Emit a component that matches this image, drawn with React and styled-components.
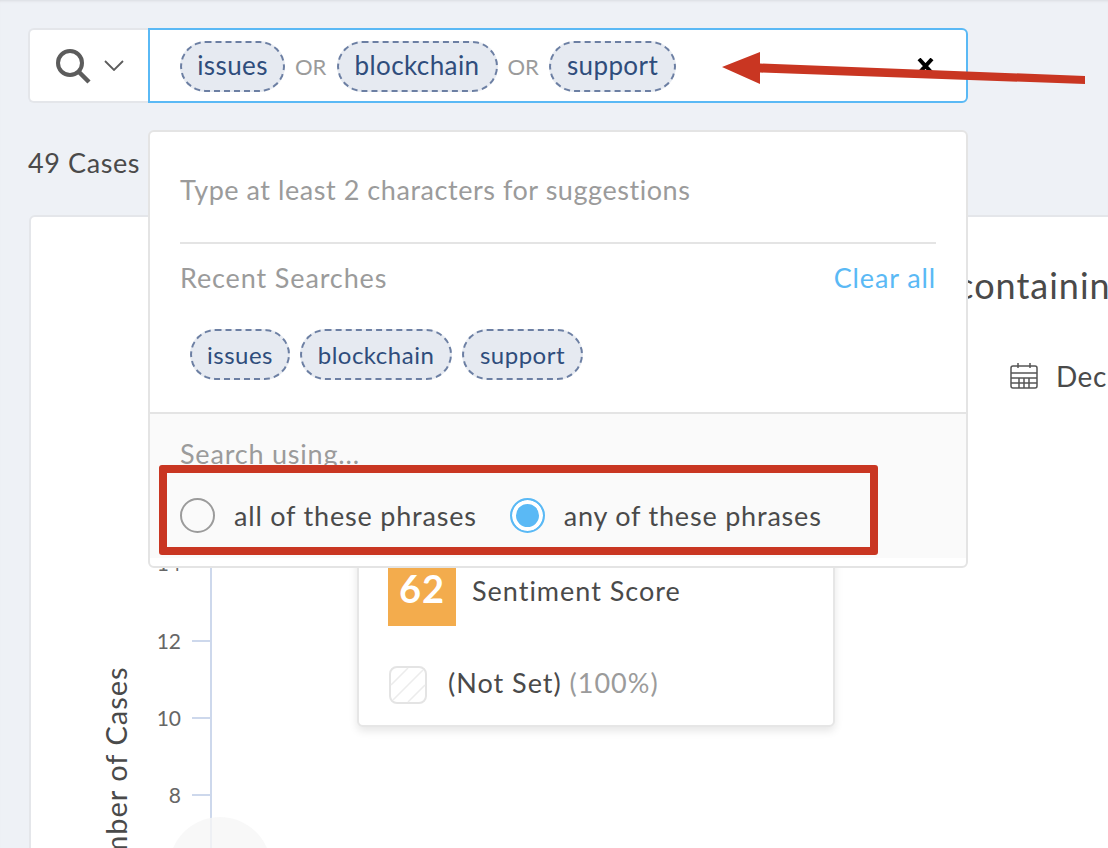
import styled, { createGlobalStyle } from 'styled-components';

const GlobalStyle = createGlobalStyle`
  html, body {
    margin: 0;
    padding: 0;
    background: #eef1f6;
  }
  * {
    box-sizing: border-box;
  }
`;

const Page = styled.div`
  position: relative;
  width: 1108px;
  height: 848px;
  overflow: hidden;
  padding: 28px 0 0 28px;
  background: #eef1f6;
  box-shadow: inset 0 3px 3px -2px #d9dbe0;
  font-family: Lato, "Noto Sans", sans-serif;
  color: #4a4a4a;
`;

const SearchRow = styled.div`
  display: flex;
  width: 940px;
  height: 75px;
`;

const Selector = styled.div`
  display: flex;
  align-items: center;
  gap: 12px;
  width: 120px;
  padding-left: 26px;
  background: #fff;
  border: 2px solid #e4e6ea;
  border-right: 0;
  border-radius: 6px 0 0 6px;
`;

const SearchField = styled.div`
  flex: 1;
  display: flex;
  align-items: center;
  gap: 10px;
  padding: 1px 32px 0 30px;
  background: #fff;
  border: 2px solid #5ab9f5;
  border-radius: 0 6px 6px 0;
`;

const Chip = styled.span`
  display: inline-flex;
  align-items: center;
  justify-content: center;
  flex: none;
  height: 51px;
  width: ${(p) => p.$w}px;
  padding-bottom: ${(p) => (p.$small ? 0 : 2)}px;
  background: #e6eaf1;
  border: 2px dashed #6c7fa3;
  border-radius: 26px;
  color: #2f4d7c;
  font-size: ${(p) => (p.$small ? 24 : 26)}px;
  font-weight: 400;
  letter-spacing: ${(p) => (p.$small ? 0.5 : 0.4)}px;
`;

const OrLabel = styled.span`
  width: 31.5px;
  color: #9b9b9b;
  font-size: 22px;
`;

const CloseIcon = styled.svg`
  margin: -1px 0 0 auto;
`;

const CountRow = styled.div`
  height: 112px;
  padding-top: 44px;
  font-size: 27px;
  line-height: 32px;
  letter-spacing: 0.6px;
`;

const Card = styled.div`
  position: relative;
  width: 1200px;
  height: 800px;
  margin-left: 1px;
  background: #fff;
  border: 2px solid #e4e6ea;
  border-radius: 6px;
`;

const CardTitle = styled.div`
  padding: 45px 0 0 764px;
  font-size: 36px;
  line-height: 46px;
  white-space: nowrap;
  letter-spacing: 1px;
`;

const DateRow = styled.div`
  display: flex;
  align-items: center;
  gap: 18px;
  padding: 52px 0 0 979px;
  font-size: 28px;
  line-height: 32px;
  letter-spacing: 0.5px;
`;

const ChartArea = styled.svg`
  display: block;
  margin-top: 29px;
`;

const Tooltip = styled.div`
  position: absolute;
  top: 285px;
  left: 326px;
  width: 478px;
  height: 225px;
  padding: 54px 0 0 29px;
  background: #fff;
  border: 2px solid #e6e6e6;
  border-radius: 6px;
  box-shadow: 0 4px 8px rgba(0, 0, 0, 0.1);
`;

const ScoreRow = styled.div`
  display: flex;
  align-items: center;
  gap: 16px;
  font-size: 27px;
  letter-spacing: 1px;
`;

const ScoreLabel = styled.span`
  margin-top: -3px;
`;

const ScoreBlock = styled.div`
  display: flex;
  align-items: center;
  justify-content: center;
  width: 68px;
  height: 68px;
  padding-bottom: 8px;
  background: #f3ac4d;
  color: #fff;
  font-size: 38px;
  font-weight: 700;
`;

const NotSetRow = styled.div`
  display: flex;
  align-items: center;
  gap: 21px;
  margin-top: 40px;
  padding-left: 1px;
  font-size: 27px;
  letter-spacing: 1px;
`;

const NotSetLabel = styled.span`
  margin-top: -6px;
`;

const Muted = styled.span`
  color: #9b9b9b;
`;

const Dropdown = styled.div`
  position: absolute;
  top: 130px;
  left: 148px;
  width: 820px;
  height: 438px;
  background: #fff;
  border: 2px solid #e4e4e4;
  border-radius: 6px;
  overflow: hidden;
`;

const DropTop = styled.div`
  height: 280px;
  padding: 0 30px;
`;

const Hint = styled.div`
  height: 112px;
  padding-top: 41px;
  border-bottom: 2px solid #e4e4e4;
  color: #9b9b9b;
  font-size: 27px;
  line-height: 34px;
  letter-spacing: 0.55px;
`;

const RecentHead = styled.div`
  display: flex;
  justify-content: space-between;
  padding-top: 17px;
  color: #9b9b9b;
  font-size: 27px;
  line-height: 34px;
  letter-spacing: 0.88px;
`;

const ClearAll = styled.span`
  color: #5ab9f5;
`;

const ChipRow = styled.div`
  display: flex;
  gap: 10px;
  padding: 34px 0 0 10px;
`;

const DropFoot = styled.div`
  height: 146px;
  padding: 23px 30px 0;
  background: #fafafa;
  border-top: 2px solid #e4e4e4;
`;

const FootLabel = styled.div`
  color: #9b9b9b;
  font-size: 27px;
  line-height: 34px;
  letter-spacing: 0.8px;
`;

const RadioRow = styled.div`
  display: flex;
  align-items: center;
  margin-top: 27px;
`;

const Radio = styled.span`
  display: block;
  flex: none;
  width: 35px;
  height: 35px;
  border-radius: 50%;
  border: 2px solid ${(p) => (p.$on ? '#5ab9f5' : '#9b9b9b')};
  background: ${(p) => (p.$on ? '#5ab9f5' : 'transparent')};
  box-shadow: ${(p) => (p.$on ? 'inset 0 0 0 4px #fff' : 'none')};
`;

const RadioLabel = styled.span`
  margin: 0 33px 0 19px;
  font-size: 27px;
  letter-spacing: 0.8px;
`;

const RedBox = styled.div`
  position: absolute;
  top: 465px;
  left: 159px;
  width: 719px;
  height: 90px;
  border: 8px solid #c93622;
  border-radius: 3px;
`;

const Arrow = styled.svg`
  position: absolute;
  top: 0;
  left: 0;
`;

const ticks = [
  { label: '14', y: 563 },
  { label: '12', y: 641 },
  { label: '10', y: 718 },
  { label: '8', y: 795 },
];

// chart origin in page coordinates, so the numbers above can be read off the screenshot
const originX = 31;
const originY = 421;

function SearchIcon() {
  return (
    <svg width="36" height="36" viewBox="0 0 36 36" fill="none" stroke="#5c5c5c" strokeWidth="4">
      <circle cx="14" cy="15" r="12" />
      <path d="M23 24l10 10" strokeWidth="4.5" />
    </svg>
  );
}

function ChevronIcon() {
  return (
    <svg width="20" height="11" viewBox="0 0 20 11" fill="none" stroke="#5c5c5c" strokeWidth="1.8">
      <path d="M1 1l9 9 9-9" />
    </svg>
  );
}

function CalendarIcon() {
  return (
    <svg width="28" height="26" viewBox="0 0 28 26" fill="none" stroke="#555" strokeWidth="1.5">
      <rect x="1" y="3" width="26" height="22" rx="2" />
      <path d="M1 10h26M1 15h26M1 20h26M9 15v10M14 15v10M19 15v10M8 0v5M20 0v5" />
    </svg>
  );
}

function HatchBox() {
  return (
    <svg width="38" height="38" viewBox="0 0 38 38" fill="none">
      <rect x="1" y="1" width="36" height="36" rx="7" stroke="#e4e4e4" strokeWidth="2" />
      <path d="M2 19L19 2M4 34L34 4M19 36L36 19" stroke="#ececec" strokeWidth="1.5" />
    </svg>
  );
}

function YAxis() {
  return (
    <ChartArea width="300" height="430" viewBox={`${originX} ${originY} 300 430`}>
      <text
        transform="translate(127 783) rotate(-90)"
        textAnchor="middle"
        fontSize="29"
        letterSpacing="1"
        fill="#4a4a4a"
      >
        Number of Cases
      </text>
      <line x1="211" y1="420" x2="211" y2="850" stroke="#cdd8ec" strokeWidth="2" />
      {ticks.map((t) => (
        <g key={t.label}>
          <line x1="192" y1={t.y} x2="211" y2={t.y} stroke="#cdd8ec" strokeWidth="2" />
          <text x="181" y={t.y + 8} textAnchor="end" fontSize="21" fill="#666">
            {t.label}
          </text>
        </g>
      ))}
      <circle cx="220" cy="868" r="51" fill="#f6f6f6" fillOpacity="0.8" />
    </ChartArea>
  );
}

export default function App() {
  return (
    <Page>
      <GlobalStyle />
      <SearchRow>
        <Selector>
          <SearchIcon />
          <ChevronIcon />
        </Selector>
        <SearchField>
          <Chip $w={105}>issues</Chip>
          <OrLabel>OR</OrLabel>
          <Chip $w={161}>blockchain</Chip>
          <OrLabel>OR</OrLabel>
          <Chip $w={127}>support</Chip>
          <CloseIcon width="17" height="16" viewBox="0 0 17 16" stroke="#000" strokeWidth="4">
            <path d="M2 1l13 14M15 1L2 15" />
          </CloseIcon>
        </SearchField>
      </SearchRow>
      <CountRow>49 Cases</CountRow>
      <Card>
        <CardTitle>49 Cases containing any of these phrases</CardTitle>
        <DateRow>
          <CalendarIcon />
          Dec 1, 2018
        </DateRow>
        <YAxis />
        <Tooltip>
          <ScoreRow>
            <ScoreBlock>62</ScoreBlock>
            <ScoreLabel>Sentiment Score</ScoreLabel>
          </ScoreRow>
          <NotSetRow>
            <HatchBox />
            <NotSetLabel>
              (Not Set) <Muted>(100%)</Muted>
            </NotSetLabel>
          </NotSetRow>
        </Tooltip>
      </Card>
      <Dropdown>
        <DropTop>
          <Hint>Type at least 2 characters for suggestions</Hint>
          <RecentHead>
            Recent Searches
            <ClearAll>Clear all</ClearAll>
          </RecentHead>
          <ChipRow>
            <Chip $small $w={100}>issues</Chip>
            <Chip $small $w={152}>blockchain</Chip>
            <Chip $small $w={121}>support</Chip>
          </ChipRow>
        </DropTop>
        <DropFoot>
          <FootLabel>Search using...</FootLabel>
          <RadioRow>
            <Radio />
            <RadioLabel>all of these phrases</RadioLabel>
            <Radio $on />
            <RadioLabel>any of these phrases</RadioLabel>
          </RadioRow>
        </DropFoot>
      </Dropdown>
      <RedBox />
      <Arrow width="1108" height="140" viewBox="0 0 1108 140">
        <path d="M722 67L760 52V63.5L1085 76V84L760 72.5V84Z" fill="#c93622" />
      </Arrow>
    </Page>
  );
}
